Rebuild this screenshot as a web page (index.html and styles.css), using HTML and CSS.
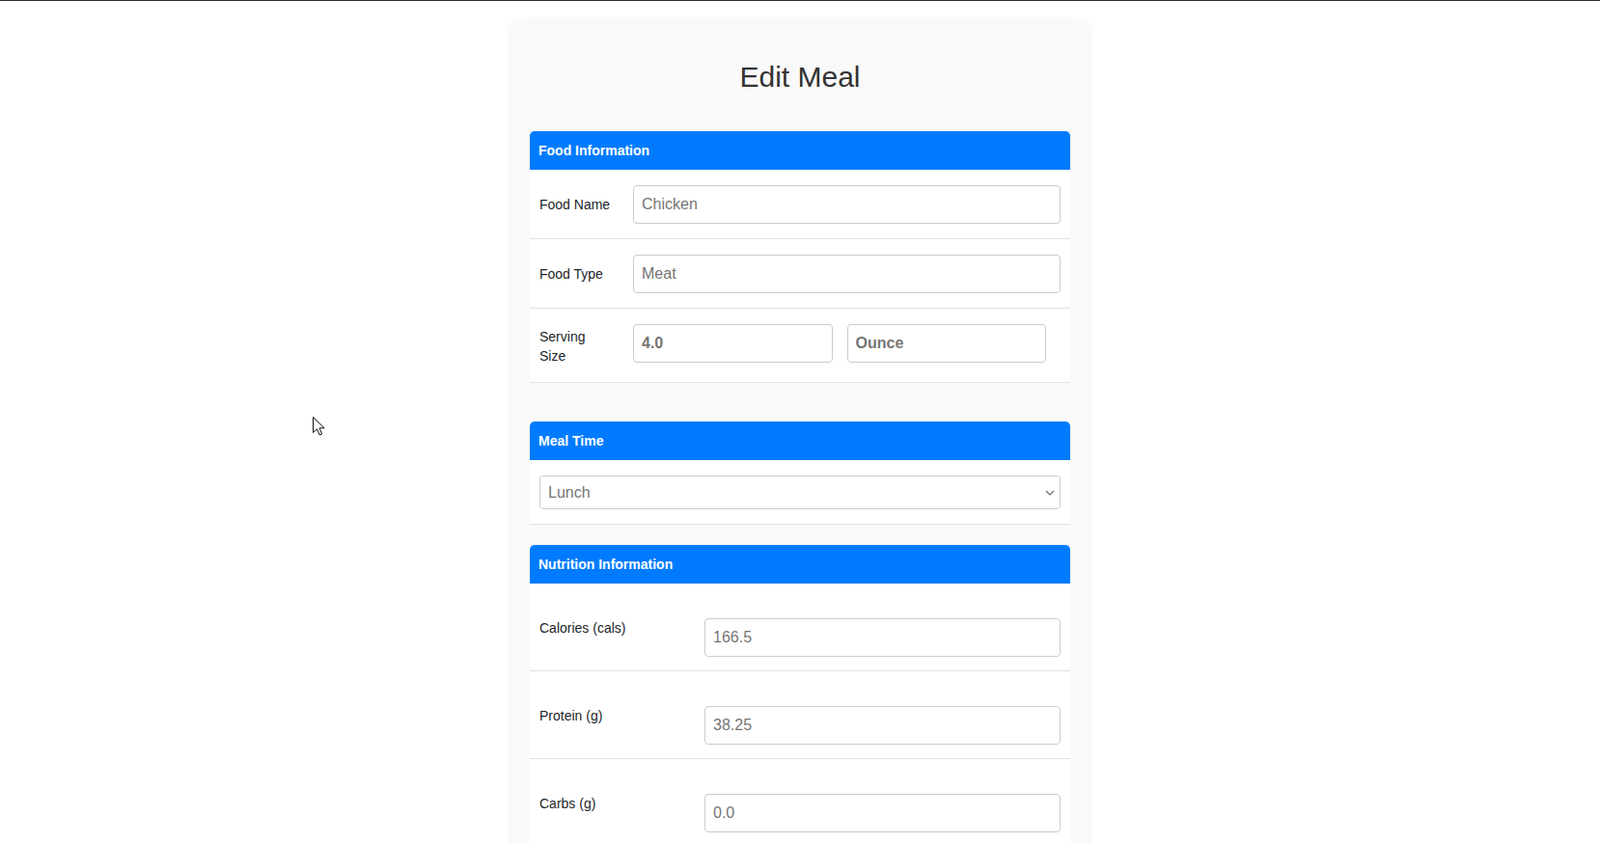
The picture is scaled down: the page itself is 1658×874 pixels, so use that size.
FILE: index.html
```html
<!DOCTYPE html>
<html lang="en">
<head>
<meta charset="utf-8">
<title>Edit Meal</title>
<link rel="stylesheet" href="styles.css">
</head>
<body>
<div class="topline"></div>
<main class="card">
  <h2 class="title">Edit Meal</h2>
  <form class="meal-form">
    <section class="panel panel-food">
      <div class="panel-head">Food Information</div>
      <table class="panel-table food-table">
        <tr>
          <th class="label-cell">Food Name</th>
          <td class="input-cell"><input class="field" type="text" placeholder="Chicken"></td>
        </tr>
        <tr>
          <th class="label-cell">Food Type</th>
          <td class="input-cell"><input class="field" type="text" placeholder="Meat"></td>
        </tr>
        <tr>
          <th class="label-cell">Serving Size</th>
          <td class="input-cell serving-cell">
            <div class="serving-pair">
              <input class="field field-bold" type="text" placeholder="4.0">
              <input class="field field-bold" type="text" placeholder="Ounce">
            </div>
          </td>
        </tr>
      </table>
    </section>

    <section class="panel panel-meal">
      <div class="panel-head">Meal Time</div>
      <table class="panel-table">
        <tr>
          <td class="select-cell">
            <div class="select-wrap">
              <select class="select">
                <option>Breakfast</option>
                <option selected>Lunch</option>
                <option>Dinner</option>
                <option>Snack</option>
              </select>
              <svg class="select-arrow" width="10" height="6" viewBox="0 0 10 6" aria-hidden="true">
                <path d="M1 1 L5 5 L9 1" fill="none" stroke="#666" stroke-width="1.1"/>
              </svg>
            </div>
          </td>
        </tr>
      </table>
    </section>

    <section class="panel panel-nutrition">
      <div class="panel-head">Nutrition Information</div>
      <table class="panel-table nutrition-table">
        <tr>
          <th class="label-cell">Calories (cals)</th>
          <td class="input-cell nutri-cell"><input class="field" type="text" placeholder="166.5"></td>
        </tr>
        <tr>
          <th class="label-cell">Protein (g)</th>
          <td class="input-cell nutri-cell"><input class="field" type="text" placeholder="38.25"></td>
        </tr>
        <tr>
          <th class="label-cell">Carbs (g)</th>
          <td class="input-cell nutri-cell"><input class="field" type="text" placeholder="0.0"></td>
        </tr>
        <tr>
          <th class="label-cell">Fat (g)</th>
          <td class="input-cell nutri-cell"><input class="field" type="text" placeholder="3.6"></td>
        </tr>
      </table>
    </section>
  </form>
</main>
<svg class="cursor" width="13" height="20" viewBox="0 0 13 20" aria-hidden="true">
  <path d="M0.5 0.5 L0.5 16.5 L4.5 12.8 L7.2 19 L9.6 18 L7 11.8 L12.2 11.8 Z" fill="#fff" stroke="#111" stroke-width="1" stroke-linejoin="miter"/>
</svg>
</body>
</html>
```
FILE: styles.css
```css
html, body {
  margin: 0;
  padding: 0;
  background: #ffffff;
}

body {
  font-family: "Liberation Sans", Arial, sans-serif;
  font-size: 14px;
  line-height: 20px;
  color: #212529;
}

.topline {
  height: 1px;
  background: #2b2b2b;
}

.card {
  box-sizing: border-box;
  width: 600px;
  margin: 22px auto 0;
  padding: 20px;
  background: #f9f9f9;
  border-radius: 10px;
  box-shadow: 0 0 8px rgba(0, 0, 0, 0.07);
}

.title {
  margin: 20px 0 40px;
  font-size: 30px;
  line-height: 33px;
  font-weight: normal;
  text-align: center;
  color: #333333;
}

.meal-form {
  margin: 0;
}

.panel-food {
  margin-bottom: 40px;
}

.panel-meal {
  margin-bottom: 21px;
}

.panel-head {
  padding: 10px 9px;
  line-height: 20px;
  background: #007bff;
  color: #ffffff;
  font-weight: bold;
  font-size: 14px;
  border-radius: 5px 5px 0 0;
}

.panel-table {
  width: 100%;
  border-collapse: collapse;
  table-layout: fixed;
  background: #ffffff;
}

.panel-table th,
.panel-table td {
  padding: 16px 10px 15px;
  border-bottom: 1px solid #dee2e6;
  vertical-align: middle;
}

.label-cell {
  text-align: left;
  font-weight: normal;
  color: #212529;
}

.food-table .label-cell {
  width: 77px;
}

.nutrition-table .label-cell {
  width: 151px;
}

.panel-table .serving-cell {
  padding-bottom: 20px;
}

.serving-pair {
  display: flex;
  gap: 15px;
  padding-right: 15px;
}

.serving-pair .field {
  flex: 1 1 0;
  min-width: 0;
}

.nutrition-table th,
.nutrition-table td {
  padding-bottom: 14px;
}

.nutri-cell .field {
  margin-top: 20px;
}

.field {
  display: block;
  box-sizing: border-box;
  width: 100%;
  height: 40px;
  margin: 0;
  padding: 0 8px;
  border: 1px solid #cccccc;
  border-radius: 4px;
  background: #ffffff;
  font-family: "Liberation Sans", Arial, sans-serif;
  font-size: 16px;
  color: #757575;
  outline: none;
}

.field::placeholder {
  color: #757575;
  opacity: 1;
}

.field-bold,
.field-bold::placeholder {
  font-weight: bold;
}

.select-wrap {
  position: relative;
}

.select {
  display: block;
  box-sizing: border-box;
  width: 100%;
  height: 35px;
  margin: 0;
  padding: 0 24px 0 8px;
  border: 1px solid #cccccc;
  border-radius: 4px;
  background: #ffffff;
  font-family: "Liberation Sans", Arial, sans-serif;
  font-size: 16px;
  color: #757575;
  appearance: none;
  -webkit-appearance: none;
  outline: none;
}

.select-arrow {
  position: absolute;
  right: 6px;
  top: 15px;
  pointer-events: none;
}

.cursor {
  position: absolute;
  left: 324px;
  top: 432px;
  pointer-events: none;
}
```
